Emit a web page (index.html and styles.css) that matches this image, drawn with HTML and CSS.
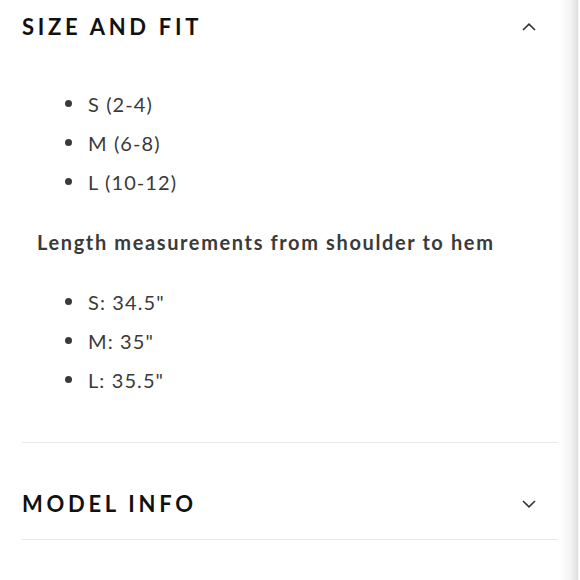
FILE: index.html
```html
<!DOCTYPE html>
<html>
<head>
<meta charset="utf-8">
<link rel="stylesheet" href="styles.css">
</head>
<body>
<div class="panel">
  <section class="acc open">
    <div class="acc-head first">
      <h2 class="acc-title">SIZE AND FIT</h2>
      <svg class="chev" width="14" height="8" viewBox="0 0 14 8"><path d="M1 7 L7 1.2 L13 7" fill="none" stroke="#333" stroke-width="1.6"/></svg>
    </div>
    <div class="acc-body">
      <ul class="list first-list">
        <li>S (2-4)</li>
        <li>M (6-8)</li>
        <li>L (10-12)</li>
      </ul>
      <p class="sub">Length measurements from shoulder to hem</p>
      <ul class="list">
        <li>S: 34.5"</li>
        <li>M: 35"</li>
        <li>L: 35.5"</li>
      </ul>
    </div>
  </section>
  <section class="acc closed">
    <div class="acc-head second">
      <h2 class="acc-title">MODEL INFO</h2>
      <svg class="chev" width="14" height="8" viewBox="0 0 14 8"><path d="M1 1 L7 6.8 L13 1" fill="none" stroke="#333" stroke-width="1.6"/></svg>
    </div>
  </section>
</div>
<div class="edge"></div>
</body>
</html>
```

FILE: styles.css
```css
html, body {
  margin: 0;
  padding: 0;
  background: #fff;
}
body {
  font-family: Lato, "Open Sans", sans-serif;
  color: #333;
}
.panel {
  padding: 0 22px;
}
.acc-head {
  display: flex;
  align-items: center;
  justify-content: space-between;
  padding-right: 22px;
}
.acc-head.first {
  height: 54px;
}
.acc-head.second {
  padding-top: 46px;
  padding-bottom: 20px;
  height: 30px;
  border-bottom: 1px solid #e8e8e8;
}
.acc-title {
  margin: 0;
  font-size: 22px;
  line-height: 30px;
  font-weight: 700;
  letter-spacing: 3.7px;
  color: #111;
}
.chev {
  display: block;
}
.acc-body {
  padding-bottom: 43px;
  border-bottom: 1px solid #e8e8e8;
}
.list {
  list-style: none;
  margin: 0;
  padding: 0 0 0 43px;
}
.first-list {
  padding-top: 30px;
}
.list li {
  display: flex;
  align-items: center;
  height: 39px;
  font-size: 20px;
  letter-spacing: 1.1px;
  color: #3a3a3a;
}
.list li::before {
  content: "";
  width: 7px;
  height: 7px;
  border-radius: 50%;
  background: #3a3a3a;
  margin-right: 16px;
}
.sub {
  margin: 26px 0 25px 15px;
  font-size: 20px;
  line-height: 30px;
  font-weight: 700;
  letter-spacing: 1.62px;
  color: #3a3a3a;
}
.edge {
  position: fixed;
  top: 0;
  right: 0;
  width: 20px;
  height: 100%;
  background: linear-gradient(to right, rgba(0,0,0,0) 0%, rgba(0,0,0,0.04) 50%, rgba(0,0,0,0.12) 88%, rgba(0,0,0,0.03) 92%, rgba(0,0,0,0.0) 100%);
}
```
